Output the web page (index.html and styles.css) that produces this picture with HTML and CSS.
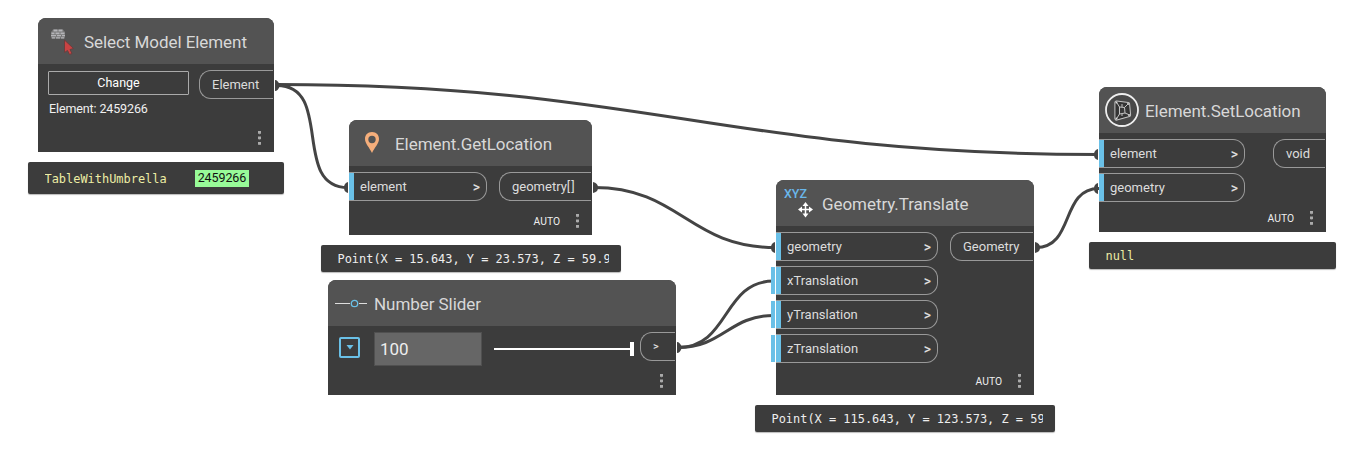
FILE: index.html
```html
<!DOCTYPE html>
<html lang="en">
<head>
<meta charset="utf-8">
<title>Graph workspace</title>
<link rel="stylesheet" href="styles.css">
</head>
<body>
<main class="canvas">
  <svg class="wires" width="1358" height="464" viewBox="0 0 1358 464">
    <g class="wire">
      <path d="M277 84.500C647 84.500 728 154.500 1098 154.500"/>
      <path d="M277 85.500C334 85.500 291 187.500 348 187.500"/>
      <path d="M594 187.500C680 187.500 689 247.500 775 247.500"/>
      <path d="M678 347.500C730 347.500 722 281 774 281"/>
      <path d="M678 347.500C723 347.500 729 315.500 774 315.500"/>
      <path d="M1036 247.500C1075 247.500 1060 188.500 1099 188.500"/>
    </g>
    <g class="knob">
      <path d="M275 80Q278 80 280 85.500Q278 91 275 91z"/>
      <path d="M593 182Q598 183 598 187.500Q598 192 593 193z"/>
      <path d="M677 342Q680 342 682 347.500Q680 353 677 353z"/>
      <path d="M1035 242Q1040 243 1040 247.500Q1040 252 1035 253z"/>
      <path d="M348 182Q344 183 344 187.500Q344 192 348 193z"/>
      <path d="M775 242Q771 243 771 247.500Q771 252 775 253z"/>
      <path d="M1098 149Q1094 150 1094 154.500Q1094 159 1098 160z"/>
      <path d="M1098 183Q1094 184 1094 188.500Q1094 193 1098 194z"/>
    </g>
  </svg>

  <section class="node select">
    <header>
      <svg class="icon" width="24" height="28" viewBox="0 0 24 28">
        <path d="M3 1.500h10l2 2.500v6.500H1V4z" fill="#777"/>
        <path d="M3.500 1.500h4v2h-4zM8.500 1.500h4v2h-4zM1.500 4.500h3v1.700h-3zM5.500 4.500h4v1.700h-4zM10.500 4.500h4v1.700h-4zM1 7h5v1.300H1zM7 7h4v1.300H7zM12 7h3v1.300h-3zM2 9.200h3v1.300H2zM6 9.200h4v1.300H6zM11 9.200h3v1.300h-3z" fill="#b4b4b8"/>
        <path d="M14.500 12v12.500l3-2 2 4 2.500-1-2-4 3.500-1z" fill="#c94343" stroke="#6b3e3e"/>
      </svg>
      <h2>Select Model Element</h2>
    </header>
    <div class="body">
      <div class="controls"><button>Change</button><p>Element: 2459266</p></div>
      <div class="port out">Element</div>
    </div>
    <footer><i class="dots"></i></footer>
  </section>
  <div class="preview p-select"><span>TableWithUmbrella</span><b>2459266</b></div>

  <section class="node get">
    <header>
      <svg class="icon" width="16" height="24" viewBox="0 0 16 24"><path fill="#f5ae7b" fill-rule="evenodd" d="M8 1C3.500 1 1 4.200 1 8c0 4.500 4.500 8.500 7 14 2.500-5.500 7-9.500 7-14 0-3.800-2.500-7-7-7zm0 3.800a3.700 3.700 0 1 1 0 7.400 3.700 3.700 0 0 1 0-7.400z"/></svg>
      <h2>Element.GetLocation</h2>
    </header>
    <div class="body">
      <div class="port in">element<em>&gt;</em></div>
      <div class="port out">geometry<span class="rank">[]</span></div>
    </div>
    <footer><span>AUTO</span><i class="dots"></i></footer>
  </section>
  <div class="preview p-get"><span>Point(X = 15.643, Y = 23.573, Z = 59.9</span></div>

  <section class="node slider">
    <header>
      <svg class="icon" width="32" height="10" viewBox="0 0 32 10"><path d="M0 5.500h15M24 5.500h8" stroke="#ddd"/><circle cx="19.500" cy="5.500" r="3.200" fill="none" stroke="#6ac0e7" stroke-width="1.300"/></svg>
      <h2>Number Slider</h2>
    </header>
    <div class="body">
      <div class="expand"><svg width="8" height="5" viewBox="0 0 8 5"><path d="M.5 0h7L4 4.500z" fill="#6ac0e7"/></svg></div>
      <div class="value">100</div>
      <div class="track"><i></i></div>
      <div class="port out"><em>&gt;</em></div>
    </div>
    <footer><i class="dots"></i></footer>
  </section>

  <section class="node translate">
    <header>
      <svg class="icon" width="32" height="36" viewBox="0 0 32 36">
        <text x="0" y="13" textLength="23" lengthAdjust="spacingAndGlyphs" class="xyz">XYZ</text>
        <path d="M21.500 19v11M16 24.500h11" stroke="#fff" stroke-width="1.500"/><path d="M21.500 17l3 4h-6zM21.500 32.500l3-4h-6zM14 24.500l4-3v6zM29 24.500l-4-3v6z" fill="#fff"/>
      </svg>
      <h2>Geometry.Translate</h2>
    </header>
    <div class="body">
      <div class="inputs">
        <div class="port in">geometry<em>&gt;</em></div>
        <div class="port in default">xTranslation<em>&gt;</em></div>
        <div class="port in default">yTranslation<em>&gt;</em></div>
        <div class="port in default">zTranslation<em>&gt;</em></div>
      </div>
      <div class="port out">Geometry</div>
    </div>
    <footer><span>AUTO</span><i class="dots"></i></footer>
  </section>
  <div class="preview p-translate"><span>Point(X = 115.643, Y = 123.573, Z = 59.9</span></div>

  <section class="node set">
    <header>
      <svg class="icon" width="34" height="34" viewBox="0 0 34 34">
        <circle cx="17" cy="17" r="16" fill="#484848" stroke="#eee" stroke-width="1.800"/>
        <path d="M11.500 9.500L23 11l1 11-12.500 3.500z" fill="#333" stroke="#c4c4c4" stroke-width="4.200" stroke-linejoin="round"/>
        <path d="M11.500 9.500L23 11l1 11-12.500 3.500z" fill="#383838" stroke="#333" stroke-width="2.200" stroke-linejoin="round"/>
        <path d="M14.500 14l5 .5.500 5.500-5.500 1zM12 10l2.500 4M22.500 11.500l-3 3M23.500 21.500L20 20M12 25l2.500-4M17 11v3M17 21v2" fill="none" stroke="#c4c4c4"/>
        <g fill="#ddd"><circle cx="11.500" cy="9.500" r="1"/><circle cx="23" cy="11" r="1"/><circle cx="24" cy="22" r="1"/><circle cx="11.500" cy="25.500" r="1"/></g>
      </svg>
      <h2>Element.SetLocation</h2>
    </header>
    <div class="body">
      <div class="inputs">
        <div class="port in">element<em>&gt;</em></div>
        <div class="port in">geometry<em>&gt;</em></div>
      </div>
      <div class="port out">void</div>
    </div>
    <footer><span>AUTO</span><i class="dots"></i></footer>
  </section>
  <div class="preview p-set"><span>null</span></div>
</main>
</body>
</html>
```
FILE: styles.css
```css
* { box-sizing: border-box; }
body { margin: 0; background: #fff; font-family: Roboto, "Noto Sans", sans-serif; font-size: 13px; color: #dcdcdc; }
h2, p { margin: 0; font-weight: 400; }
.canvas { position: relative; width: 1358px; height: 464px; overflow: hidden; }
.wires { position: absolute; left: 0; top: 0; }
.wire { fill: none; stroke: #444; stroke-width: 3; }
.knob { fill: #444; }

.node { position: absolute; display: flex; flex-direction: column; background: #3c3c3c; border-radius: 8px 8px 0 0; }
.select { left: 38px; top: 18px; width: 236px; height: 134px; }
.get { left: 349px; top: 120px; width: 243px; height: 115px; }
.slider { left: 328px; top: 280px; width: 348px; height: 115px; }
.translate { left: 776px; top: 180px; width: 258px; height: 215px; }
.set { left: 1099px; top: 87px; width: 227px; height: 145px; }

header { display: flex; flex: none; align-items: center; height: 46px; background: #535353; border-radius: 8px 8px 0 0; }
h2 { font-size: 17px; line-height: 24px; letter-spacing: -.06px; white-space: nowrap; padding-top: 1px; color: #d8d8d8; }
.icon { display: block; flex: none; }
.select header { padding-left: 12px; gap: 10px; }
.select .icon { margin-top: 1px; }
.get header { padding-left: 15px; gap: 15px; }
.slider header { padding-left: 7px; gap: 7px; }
.translate header { padding-left: 8px; gap: 6px; }
.set header { padding-left: 6px; gap: 6px; }
.xyz { font-family: Roboto, sans-serif; font-size: 13px; font-weight: 500; fill: #6ab7ea; }

.body { display: flex; flex: 1; justify-content: space-between; align-items: flex-start; padding: 6px 1px 0 0; }
.inputs { display: flex; flex-direction: column; gap: 5px; }
.port { display: flex; align-items: center; height: 29px; border: 1px solid #999; white-space: nowrap; }
.in { width: 138px; padding: 0 6px 0 11px; border-left: 0; border-radius: 0 12px 12px 0; background: linear-gradient(#6ac0e7, #6ac0e7) 0 0 / 5px 100% no-repeat; justify-content: space-between; }
.translate .in { width: 162px; }
.set .in { width: 146px; }
.default { position: relative; }
.default::before { content: ""; position: absolute; left: -5px; top: 0; width: 4px; height: 27px; background: #6ac0e7; }
.out { border-right: 0; border-radius: 12px 0 0 12px; padding-left: 12px; }
.rank { letter-spacing: 1px; }
.select .out { width: 74px; }
.get .out { width: 92px; }
.translate .out { width: 83px; }
.set .out { width: 52px; }
em { font-style: normal; font-size: 14px; font-weight: 500; }

.select .body { padding-left: 10px; }
.controls { display: flex; flex-direction: column; gap: 6px; padding-top: 1px; }
button { width: 141px; height: 24px; padding: 0 0 2px; border: 1px solid #aaa; border-radius: 1px; background: none; color: #fff; font: 12.5px Roboto, sans-serif; }
.controls p { padding-left: 1px; font-size: 12.5px; line-height: 16px; letter-spacing: -.12px; color: #f0f0f0; }

.slider .body { padding-left: 11px; justify-content: flex-start; }
.expand { display: grid; place-items: center; width: 21px; height: 21px; margin-top: 5px; border: 2px solid #6ac0e7; border-radius: 2px; }
.value { width: 108px; height: 34px; margin: 0 12px 0 14px; padding-left: 5px; border: 1px solid #505050; background: #666; color: #eee; font-size: 17px; line-height: 32px; }
.track { display: flex; justify-content: flex-end; align-items: center; width: 140px; height: 14px; margin-top: 10px; background: linear-gradient(#fff, #fff) 0 6px / 100% 2px no-repeat; }
.track i { width: 4px; height: 14px; background: #fff; }
.slider .out { width: 35px; margin-left: 6px; }
.slider .out em { font-size: 11px; }

footer { display: flex; justify-content: flex-end; align-items: center; height: 28px; padding: 0 13px 0 0; gap: 16px; font-size: 10.300px; color: #eee; flex: none; }
.dots { width: 3px; height: 14px; background: radial-gradient(circle at 1.5px 1.500px, #aaa 1.500px, transparent 1.800px) 0 0 / 3px 5.500px; }

.preview { position: absolute; display: flex; align-items: center; height: 27px; padding: 0 12.500px 0 16.500px; border-radius: 2px; background: #3c3c3c; box-shadow: 0 1px 1px #bbb; font-family: "DejaVu Sans Mono", monospace; font-size: 11.950px; color: #eee; white-space: pre; }
.preview span { overflow: hidden; padding-top: 1px; }
.p-select { left: 28px; top: 162px; width: 256px; height: 32px; gap: 28px; }
.p-select b { height: 17px; padding: 0 3px; background: #98fb98; color: #111; font: 12.500px/16px Roboto, sans-serif; letter-spacing: -.1px; }
.p-get { left: 321px; top: 245px; width: 300px; }
.p-translate { left: 755px; top: 405px; width: 300px; }
.p-set { left: 1089px; top: 242px; width: 247px; }
.p-select span, .p-set span { color: #ededa5; }
```
